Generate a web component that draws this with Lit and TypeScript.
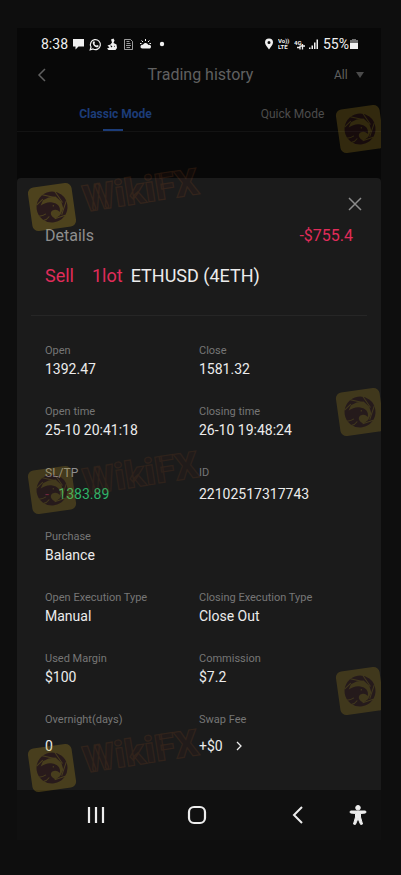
import { LitElement, html, css, svg } from "lit";
import { customElement, property } from "lit/decorators.js";

type Field = {
  label: string;
  value: string;
  tone?: "gain";
  link?: boolean;
};

type Row = { fields: Field[]; spread?: "medium" | "large" };

const ROWS: Row[] = [
  { fields: [{ label: "Open", value: "1392.47" }, { label: "Close", value: "1581.32" }] },
  {
    fields: [
      { label: "Open time", value: "25-10 20:41:18" },
      { label: "Closing time", value: "26-10 19:48:24" },
    ],
  },
  {
    spread: "medium",
    fields: [
      { label: "SL/TP", value: "1383.89", tone: "gain" },
      { label: "ID", value: "22102517317743" },
    ],
  },
  { fields: [{ label: "Purchase", value: "Balance" }] },
  {
    fields: [
      { label: "Open Execution Type", value: "Manual" },
      { label: "Closing Execution Type", value: "Close Out" },
    ],
  },
  { fields: [{ label: "Used Margin", value: "$100" }, { label: "Commission", value: "$7.2" }] },
  {
    spread: "large",
    fields: [
      { label: "Overnight(days)", value: "0" },
      { label: "Swap Fee", value: "+$0", link: true },
    ],
  },
];

/* Tilted eagle tile with the brand name beside it */
@customElement("brand-mark")
export class BrandMark extends LitElement {
  @property({ type: Boolean }) compact = false;

  static styles = css`
    :host {
      display: block;
      pointer-events: none;
    }
    svg {
      display: block;
      overflow: visible;
    }
    .tile {
      fill: #c09c24;
    }
    .dark {
      fill: #4c1a1e;
    }
    .gap {
      fill: none;
      stroke: #c09c24;
      stroke-width: 1;
    }
    .name {
      font: 900 37px Roboto, sans-serif;
      fill: #5a2418;
      fill-opacity: 0.4;
      stroke: #b05a24;
      stroke-opacity: 0.5;
      stroke-width: 1.2;
    }
  `;

  render() {
    return html`
      <svg width="180" height="64" viewBox="-26 -38 180 64" aria-hidden="true">
        <g transform="rotate(-8)">
          <rect class="tile" x="-22" y="-22" width="44" height="44" rx="6" />
          <circle class="dark" r="15.500" />
          <path
            class="tile"
            d="M-11-3 -8-8 -2-10 5-10 10-4 11 3 7 9 2 12C-3 9-3 5 0 3.500 3 2.500 5 3.500 7 6 9 1 6-3 1-4.500-3-6-7-5-11-3Z"
          />
          <path class="gap" d="M-8-13.500 4-9M5-15 11-3M15-4 8.500 9M12 10 1 12M-15-4-8-9M-14 7C-11 8-9 7-7 6M-10 12C-8 12-6 11-4 9" />
          <circle class="tile" cx="1.500" cy="-1" r="0.700" />
        </g>
        ${this.compact
          ? null
          : svg`<text class="name" transform="translate(33 5) rotate(-9)">WikiFX</text>`}
      </svg>
    `;
  }
}

@customElement("status-bar")
export class StatusBar extends LitElement {
  static styles = css`
    :host {
      display: flex;
      align-items: center;
      justify-content: space-between;
      height: 32px;
      padding: 0 23px 0 24px;
      color: #f0f0f0;
      font: 14px/16px Roboto, sans-serif;
    }
    .group {
      display: flex;
      align-items: center;
      gap: 4px;
    }
    svg {
      display: block;
      fill: currentColor;
    }
    .line {
      fill: none;
      stroke: currentColor;
    }
    .tiny {
      font: 700 6px Roboto, sans-serif;
    }
    .power {
      display: flex;
      align-items: center;
      gap: 1px;
    }
    .cut {
      fill: #080808;
    }
    .dim {
      opacity: 0.45;
    }
  `;

  render() {
    return html`
      <div class="group">
        <span>8:38</span>
        <svg width="13" height="12" viewBox="0 0 13 12"><path d="M1 1H12V8.500H6.500L3.500 11.500V8.500H1Z" /></svg>
        <svg width="13" height="13" viewBox="0 0 13 13">
          <path class="line" stroke-width="1.2" d="M1.200 11.800 2 9A5 5 0 1 1 4 11Z" />
          <path d="M4.300 3.500 5.400 3.300 6 5 5.400 5.800C5.900 6.800 6.500 7.300 7.400 7.600L8.200 6.900 9.700 7.700C9.500 9 8.500 9.400 7.400 9.200 5.500 8.700 4 7 3.700 5.200 3.700 4.500 3.900 3.900 4.300 3.500Z" />
        </svg>
        <svg width="12" height="13" viewBox="0 0 12 13">
          <path d="M5 1.500 7.500 .500 8.500 2.500 7.500 5 10.500 6.500 11 10 9.500 12H2.500L1 10.500 3.500 9.500 1.500 7.500 4.500 6.500 6 4.500Z" />
          <path class="cut" d="M4.500 7 6.500 8.500 5 9.500Z M8 7.500 9 8.500 8 9Z" />
        </svg>
        <svg width="13" height="13" viewBox="0 0 13 13">
          <path class="line" stroke-width="0.9" d="M2.500 1.500H8.500L10.500 3.500V11.500H2.500Z M4.500 3.500H7.500M4.500 5.500H8.500M4 7.500H9M4.500 9.500H8" opacity="0.7" />
        </svg>
        <svg width="13" height="13" viewBox="0 0 13 13">
          <path d="M1.500 8.500C1.500 7 3 6.500 4 6.800 5 4.300 8.500 4.300 9.200 7 11 6.500 12 7.500 12 8.700 12 10 11 10.500 10 10.500H3.500C2 10.500 1.500 9.500 1.500 8.500Z" />
          <path class="line" stroke-width="1" d="M6.500 1V3M2.500 2.500 4 4M10.500 2.500 9 4M1 5.500H2.500M10.500 5.500H12" />
        </svg>
        <svg width="12" height="13" viewBox="0 0 12 13"><circle cx="6" cy="6" r="2.200" /></svg>
      </div>
      <div class="group">
        <svg width="10" height="12" viewBox="0 0 10 12">
          <path fill-rule="evenodd" d="M5 .500A4 4 0 0 1 9 4.500C9 7 6.500 9 5 11.500 3.500 9 1 7 1 4.500A4 4 0 0 1 5 .500ZM5 3A1.500 1.500 0 1 0 5 6 1.500 1.500 0 0 0 5 3Z" />
        </svg>
        <svg width="12" height="12" viewBox="0 0 12 12">
          <text class="tiny" x="0" y="5">Vo))</text>
          <text class="tiny" x="0" y="11">LTE</text>
        </svg>
        <svg width="11" height="12" viewBox="0 0 11 12">
          <text class="tiny" x="0" y="7">4G</text>
          <path class="line" stroke-width="1.3" d="M3 9.500H6M6 7.500V11.500M8.500 6V11.500M6.500 8H11" />
        </svg>
        <svg width="10" height="12" viewBox="0 0 10 12">
          <path d="M0 9.500H1.500V11H0ZM2.500 7.500H4V11H2.500ZM5 4.500H6.500V11H5ZM7.500 1.500H9V11H7.500Z" />
        </svg>
        <span class="power">
          55%
          <svg width="8" height="12" viewBox="0 0 8 12">
            <path class="dim" d="M2 1H6V2H8V5H0V2H2Z" />
            <path d="M0 5H8V11H0Z" />
          </svg>
        </span>
      </div>
    `;
  }
}

@customElement("app-root")
export class AppRoot extends LitElement {
  static styles = css`
    :host {
      display: block;
      box-sizing: border-box;
      min-height: 100vh;
      padding: 28px 20px 35px 17px;
      background: #0e0e0e;
      color: #ececec;
      font: 14px/20px Roboto, sans-serif;
    }
    button,
    select {
      margin: 0;
      padding: 0;
      border: 0;
      background: none;
      color: inherit;
      font: inherit;
      appearance: none;
    }
    svg {
      display: block;
      fill: none;
      stroke: currentColor;
    }
    .phone {
      position: relative;
      overflow: hidden;
      background: #080808;
    }
    .header {
      display: grid;
      grid-template-columns: 1fr auto 1fr;
      align-items: center;
      height: 30px;
      padding: 0 17px 0 20px;
      color: #606060;
    }
    .title {
      margin: 0;
      font: 400 16px/20px Roboto, sans-serif;
    }
    .filter {
      display: flex;
      align-items: center;
      justify-content: flex-end;
      gap: 8px;
      font-size: 12px;
    }
    .arrow {
      fill: #4a4a4a;
      stroke: none;
    }
    .tabs {
      display: grid;
      grid-template-columns: 1fr 1fr;
      height: 33px;
      margin-top: 8px;
      padding-left: 10px;
      border-bottom: 1px solid #131313;
      color: #4c4c4c;
      font-size: 12px;
    }
    .tab {
      display: flex;
      flex-direction: column;
      align-items: center;
      justify-content: space-between;
      padding-top: 6px;
    }
    .tab.active {
      color: #1c3c78;
      font-weight: 700;
    }
    .tab.active::after {
      content: "";
      width: 20px;
      height: 2px;
      margin-right: 6px;
      background: #1c3c78;
    }
    .sheet {
      margin-top: 46px;
      padding: 16px 28px 34px;
      border-radius: 4px 4px 0 0;
      background: #1b1b1b;
    }
    .close {
      display: block;
      margin: 0 -12px 0 auto;
      padding: 3px;
      color: #8c8c8c;
    }
    .summary,
    .order {
      display: flex;
      align-items: center;
    }
    .summary {
      justify-content: space-between;
      margin-top: 12px;
      color: #8e8e8e;
      font-size: 16px;
    }
    .summary h2 {
      margin: 0;
      font: inherit;
    }
    .loss {
      color: #e02c5a;
    }
    .order {
      height: 24px;
      margin-top: 18px;
      font-size: 18px;
    }
    .side {
      margin-right: 18px;
    }
    .lots {
      margin-right: 8px;
    }
    .rule {
      height: 1px;
      margin: 27px -14px;
      border: 0;
      background: #262626;
    }
    .fields {
      display: grid;
      gap: 25px;
      margin: 0;
    }
    .row {
      display: grid;
      grid-template-columns: 1fr 1fr;
    }
    dt {
      color: #767676;
      font-size: 11px;
      line-height: 16px;
    }
    dt.gain-label {
      color: #8e8e8e;
      font-size: 12px;
    }
    dd {
      margin: 0;
    }
    .medium dd {
      margin-top: 3px;
    }
    .large dd {
      margin-top: 8px;
    }
    .gain {
      color: #2fb568;
    }
    .gain::before {
      content: "-";
      margin-right: 6px;
      color: #7c2a48;
    }
    .link {
      display: flex;
      align-items: center;
      gap: 12px;
    }
    .nav {
      display: grid;
      grid-template-columns: 1fr 1fr 1fr 18px;
      align-items: center;
      height: 50px;
      padding: 0 14px 0 28px;
      background: #101010;
      color: #ededed;
    }
    .nav button {
      display: grid;
      place-items: center;
    }
    .marks {
      position: absolute;
      inset: 0;
      opacity: 0.3;
      pointer-events: none;
    }
    .mark {
      position: absolute;
      left: 9px;
    }
    .mark.right {
      left: 317px;
      opacity: 0.75;
    }
    .m1 {
      top: 141px;
    }
    .m2 {
      top: 424px;
      opacity: 0.8;
    }
    .m3 {
      top: 702px;
      opacity: 0.9;
    }
    .r1 {
      top: 63px;
    }
    .r2 {
      top: 346px;
    }
    .r3 {
      top: 625px;
    }
  `;

  private renderField(field: Field) {
    return html`
      <div>
        <dt class=${field.tone ? "gain-label" : ""}>${field.label}</dt>
        <dd class=${field.tone ?? ""}>
          ${field.link
            ? html`<button class="link" type="button">
                ${field.value}
                <svg width="8" height="10" viewBox="0 0 8 10" stroke-width="1.3"><path d="M2 1 6 5 2 9" /></svg>
              </button>`
            : field.value}
        </dd>
      </div>
    `;
  }

  render() {
    return html`
      <main class="phone">
        <status-bar></status-bar>
        <header class="header">
          <button type="button" aria-label="Back">
            <svg width="9" height="14" viewBox="0 0 9 14" stroke-width="1.5"><path d="M8 1 2 7 8 13" /></svg>
          </button>
          <h1 class="title">Trading history</h1>
          <label class="filter">
            <select aria-label="Filter"><option>All</option></select>
            <svg class="arrow" width="8" height="6" viewBox="0 0 8 6"><path d="M0 0H8L4 6Z" /></svg>
          </label>
        </header>
        <nav class="tabs">
          <button class="tab active" type="button">Classic Mode</button>
          <button class="tab" type="button">Quick Mode</button>
        </nav>

        <section class="sheet">
          <button class="close" type="button" aria-label="Close">
            <svg width="14" height="14" viewBox="0 0 14 14" stroke-width="1.5"><path d="M1 1 13 13M13 1 1 13" /></svg>
          </button>
          <div class="summary">
            <h2>Details</h2>
            <span class="loss">-$755.4</span>
          </div>
          <div class="order">
            <span class="side loss">Sell</span>
            <span class="lots loss">1lot</span>
            <span>ETHUSD (4ETH)</span>
          </div>
          <hr class="rule" />
          <dl class="fields">
            ${ROWS.map(
              (row) => html`<div class="row ${row.spread ?? ""}">${row.fields.map((f) => this.renderField(f))}</div>`
            )}
          </dl>
        </section>

        <nav class="nav">
          <button type="button" aria-label="Recents">
            <svg width="18" height="18" viewBox="0 0 18 18" stroke-width="2.2"><path d="M2 1V17M9 1V17M16 1V17" /></svg>
          </button>
          <button type="button" aria-label="Home">
            <svg width="20" height="20" viewBox="0 0 20 20" stroke-width="2.2"><rect x="2" y="2" width="16" height="16" rx="5" /></svg>
          </button>
          <button type="button" aria-label="Back">
            <svg width="12" height="18" viewBox="0 0 12 18" stroke-width="2"><path d="M10 1 2 9 10 17" /></svg>
          </button>
          <button type="button" aria-label="Accessibility">
            <svg width="18" height="20" viewBox="0 0 18 20" stroke="none">
              <circle cx="9" cy="2.800" r="2.300" fill="currentColor" />
              <path fill="currentColor" d="M1.500 6H16.500Q17.500 7 16.500 8L11.500 8.500V12L13.500 19Q12.500 20 11.500 19.300L9 13.500 6.500 19.300Q5.500 20 4.500 19L6.500 12V8.500L1.500 8Q.500 7 1.500 6Z" />
            </svg>
          </button>
        </nav>

        <div class="marks">
          <brand-mark class="mark m1"></brand-mark>
          <brand-mark class="mark m2"></brand-mark>
          <brand-mark class="mark m3"></brand-mark>
          <brand-mark class="mark right r1" compact></brand-mark>
          <brand-mark class="mark right r2" compact></brand-mark>
          <brand-mark class="mark right r3" compact></brand-mark>
        </div>
      </main>
    `;
  }
}
